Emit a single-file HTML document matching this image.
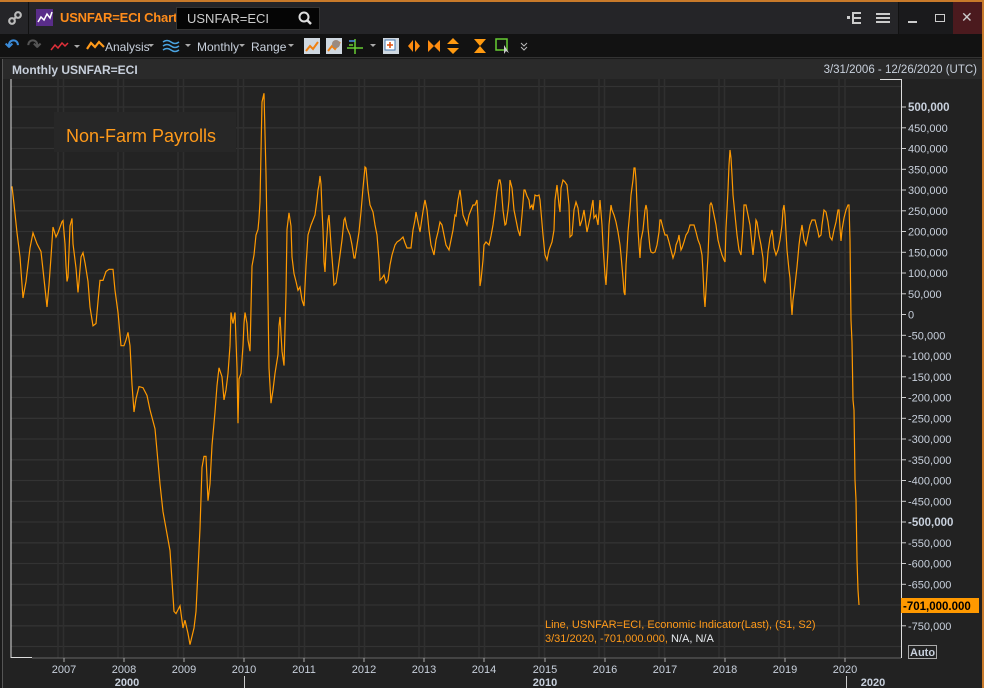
<!DOCTYPE html>
<html><head><meta charset="utf-8"><style>
*{margin:0;padding:0;box-sizing:border-box}
body{width:984px;height:688px;background:#1a1a1a;font-family:"Liberation Sans",sans-serif;overflow:hidden;position:relative}
.abs{position:absolute;white-space:nowrap}
</style></head><body>
<div class="abs" style="left:0;top:0;width:984px;height:2px;background:#c87a2a"></div>
<div class="abs" style="left:982px;top:0;width:2px;height:688px;background:#c87a2a"></div>
<div class="abs" style="left:0;top:2px;width:982px;height:32px;background:#252528"></div>
<div class="abs" style="left:28px;top:2px;width:1px;height:32px;background:#111"></div>
<svg class="abs" style="left:8px;top:11px" width="14" height="14"><g stroke="#bbb" stroke-width="2.2" fill="none"><circle cx="4" cy="10" r="2.8"/><circle cx="10" cy="4" r="2.8"/><line x1="6" y1="8" x2="8" y2="6"/></g></svg>
<svg class="abs" style="left:36px;top:9px" width="17" height="17"><rect width="17" height="17" fill="#5a2d8a"/><polyline points="2,13 5,8 8,11 11,5 14,9 16,3" stroke="#fff" stroke-width="1.5" fill="none"/></svg>
<div class="abs" style="left:60px;top:10px;color:#ff8c1a;font-size:13px;font-weight:bold;letter-spacing:-0.2px">USNFAR=ECI Chart</div>
<div class="abs" style="left:176px;top:7px;width:144px;height:23px;background:#050505;border:1px solid #333"></div>
<div class="abs" style="left:187px;top:11px;color:#ccc;font-size:13px">USNFAR=ECI</div>
<svg class="abs" style="left:298px;top:11px" width="14" height="14"><circle cx="6" cy="6" r="4.5" stroke="#ddd" stroke-width="2" fill="none"/><line x1="9" y1="9" x2="13" y2="13" stroke="#ddd" stroke-width="2.5"/></svg>
<svg class="abs" style="left:847px;top:11px" width="16" height="14"><g fill="#ccc"><rect x="0" y="5" width="3" height="3"/><rect x="5" y="1" width="2" height="12"/><rect x="5" y="1" width="9" height="2"/><rect x="5" y="6" width="9" height="2"/><rect x="5" y="11" width="9" height="2"/></g></svg>
<svg class="abs" style="left:876px;top:13px" width="14" height="11"><g fill="#ccc"><rect y="0" width="14" height="2"/><rect y="4" width="14" height="2"/><rect y="8" width="14" height="2"/></g></svg>
<div class="abs" style="left:898px;top:2px;width:1px;height:32px;background:#111"></div>
<div class="abs" style="left:899px;top:2px;width:83px;height:32px;background:#1a1a1c"></div>
<div class="abs" style="left:908px;top:21px;width:9px;height:2px;background:#ccc"></div>
<div class="abs" style="left:935px;top:14px;width:10px;height:8px;border:1.5px solid #ccc"></div>
<div class="abs" style="left:953px;top:2px;width:29px;height:32px;background:#4b1a1e"></div>
<div class="abs" style="left:961px;top:9px;color:#ccc;font-size:14px">✕</div>
<div class="abs" style="left:0;top:34px;width:982px;height:24px;background:#121212;border-bottom:1px solid #333"></div>
<div class="abs" style="left:5px;top:36px;color:#3b8bd8;font-size:17px;font-weight:bold">↶</div>
<div class="abs" style="left:27px;top:36px;color:#555;font-size:17px;font-weight:bold">↷</div>
<svg class="abs" style="left:50px;top:40px" width="60" height="12"><polyline points="1,10 5,5 8,8 12,3 15,6 18,3" stroke="#e0303a" stroke-width="1.5" fill="none"/><path d="M24 5 l3 3 l3 -3z" fill="#aaa"/></svg>
<svg class="abs" style="left:86px;top:39px" width="20" height="12"><polyline points="1,10 5,4 9,8 13,3 18,8" stroke="#ff9a1a" stroke-width="2.2" fill="none"/></svg>
<div class="abs" style="left:105px;top:40px;color:#c8d0dc;font-size:12px">Analysis</div>
<svg class="abs" style="left:148px;top:44px" width="8" height="5"><path d="M0 0 l3 3 l3 -3z" fill="#aaa"/></svg>
<svg class="abs" style="left:162px;top:38px" width="18" height="16"><g stroke="#4aa3e0" stroke-width="1.5" fill="none"><path d="M1 4 q4 -3 8 0 t8 0"/><path d="M1 8 q4 -3 8 0 t8 0"/><path d="M1 12 q4 -3 8 0 t8 0"/></g></svg>
<svg class="abs" style="left:185px;top:44px" width="8" height="5"><path d="M0 0 l3 3 l3 -3z" fill="#aaa"/></svg>
<div class="abs" style="left:197px;top:40px;color:#c8d0dc;font-size:12px">Monthly</div>
<svg class="abs" style="left:239px;top:44px" width="8" height="5"><path d="M0 0 l3 3 l3 -3z" fill="#aaa"/></svg>
<div class="abs" style="left:251px;top:40px;color:#c8d0dc;font-size:12px">Range</div>
<svg class="abs" style="left:288px;top:44px" width="8" height="5"><path d="M0 0 l3 3 l3 -3z" fill="#aaa"/></svg>
<svg class="abs" style="left:303px;top:37px" width="240" height="18">
<rect x="1" y="1" width="16" height="16" fill="#cfd8e0"/><polyline points="3,14 7,9 10,12 15,5" stroke="#f08010" stroke-width="2" fill="none"/>
<rect x="23" y="1" width="16" height="16" fill="#cfd8e0"/><polyline points="25,14 29,9 32,12 37,5" stroke="#f08010" stroke-width="2" fill="none"/><circle cx="33" cy="7" r="4" fill="#9a8a80"/>
<path d="M46 8 h4 M44 11 h16 M52 2 v15" stroke="#6c3" stroke-width="1.5"/><path d="M46 4 h6" stroke="#4a90e0" stroke-width="1.5"/>
<path d="M67 7 l3 3 l3 -3z" fill="#aaa"/>
<rect x="80" y="1" width="16" height="16" fill="#cfd8e0"/><rect x="82" y="3" width="10" height="10" fill="#fff" stroke="#4a7ab0"/><path d="M87 5 v6 M84 8 h6" stroke="#e05010" stroke-width="1.5"/>
<path d="M105 9 l5 -6 v12z M117 9 l-5 -6 v12z" fill="#ff8c10"/>
<path d="M125 3 l6 6 l-6 6z M137 3 l-6 6 l6 6z" fill="#ff8c10"/>
<path d="M150 1 l6 6 h-12z M150 17 l6 -6 h-12z" fill="#ff9a10"/>
<path d="M171 2 h12 l-6 7z M171 16 h12 l-6 -7z" fill="#ff9a10"/>
<rect x="193" y="2" width="11" height="11" fill="none" stroke="#6c3" stroke-width="1.5"/><path d="M201 8 l0 9 l2 -3 l3 2z" fill="#ccc"/>
<path d="M218 6 l3 3 l3 -3 M218 10 l3 3 l3 -3" stroke="#bbb" fill="none"/>
</svg>
<div class="abs" style="left:2px;top:59px;width:980px;height:629px;background:#222;border-left:1px solid #555"></div>
<div class="abs" style="left:3px;top:59px;width:979px;height:20px;background:#2a2a2a"></div>
<div class="abs" style="left:12px;top:63px;color:#c8d0dc;font-size:12px;font-weight:bold">Monthly USNFAR=ECI</div>
<div class="abs" style="right:7px;top:64px;color:#c8d0dc;font-size:11.5px">3/31/2006 - 12/26/2020 (UTC)</div>
<svg class="abs" style="left:0;top:0" width="984" height="688">
<rect x="11" y="79" width="890" height="579" fill="#232323"/>
<g stroke="#333" stroke-width="1.3">
<line x1="11" x2="901" y1="86.5" y2="86.5"/>
<line x1="11" x2="901" y1="107" y2="107"/><line x1="11" x2="901" y1="127.8" y2="127.8"/><line x1="11" x2="901" y1="148.5" y2="148.5"/><line x1="11" x2="901" y1="169.3" y2="169.3"/><line x1="11" x2="901" y1="190" y2="190"/><line x1="11" x2="901" y1="210.8" y2="210.8"/><line x1="11" x2="901" y1="231.5" y2="231.5"/><line x1="11" x2="901" y1="252.3" y2="252.3"/><line x1="11" x2="901" y1="273" y2="273"/><line x1="11" x2="901" y1="293.8" y2="293.8"/><line x1="11" x2="901" y1="314.5" y2="314.5"/><line x1="11" x2="901" y1="335.3" y2="335.3"/><line x1="11" x2="901" y1="356" y2="356"/><line x1="11" x2="901" y1="376.8" y2="376.8"/><line x1="11" x2="901" y1="397.5" y2="397.5"/><line x1="11" x2="901" y1="418.3" y2="418.3"/><line x1="11" x2="901" y1="439" y2="439"/><line x1="11" x2="901" y1="459.8" y2="459.8"/><line x1="11" x2="901" y1="480.5" y2="480.5"/><line x1="11" x2="901" y1="501.3" y2="501.3"/><line x1="11" x2="901" y1="522" y2="522"/><line x1="11" x2="901" y1="542.8" y2="542.8"/><line x1="11" x2="901" y1="563.5" y2="563.5"/><line x1="11" x2="901" y1="584.3" y2="584.3"/><line x1="11" x2="901" y1="605" y2="605"/><line x1="11" x2="901" y1="625.8" y2="625.8"/><line x1="11" x2="901" y1="646.5" y2="646.5"/>
</g>
<g stroke="#2f2f2f" stroke-width="1.5">
<line x1="58" x2="58" y1="79" y2="658"/><line x1="63.5" x2="63.5" y1="79" y2="658"/>
<line x1="118" x2="118" y1="79" y2="658"/><line x1="123.5" x2="123.5" y1="79" y2="658"/>
<line x1="178" x2="178" y1="79" y2="658"/><line x1="183.5" x2="183.5" y1="79" y2="658"/>
<line x1="238" x2="238" y1="79" y2="658"/><line x1="243.5" x2="243.5" y1="79" y2="658"/>
<line x1="299" x2="299" y1="79" y2="658"/><line x1="304.5" x2="304.5" y1="79" y2="658"/>
<line x1="359" x2="359" y1="79" y2="658"/><line x1="364.5" x2="364.5" y1="79" y2="658"/>
<line x1="419" x2="419" y1="79" y2="658"/><line x1="424.5" x2="424.5" y1="79" y2="658"/>
<line x1="479" x2="479" y1="79" y2="658"/><line x1="484.5" x2="484.5" y1="79" y2="658"/>
<line x1="539" x2="539" y1="79" y2="658"/><line x1="544.5" x2="544.5" y1="79" y2="658"/>
<line x1="599" x2="599" y1="79" y2="658"/><line x1="604.5" x2="604.5" y1="79" y2="658"/>
<line x1="659" x2="659" y1="79" y2="658"/><line x1="664.5" x2="664.5" y1="79" y2="658"/>
<line x1="719" x2="719" y1="79" y2="658"/><line x1="724.5" x2="724.5" y1="79" y2="658"/>
<line x1="779" x2="779" y1="79" y2="658"/><line x1="784.5" x2="784.5" y1="79" y2="658"/>
<line x1="839" x2="839" y1="79" y2="658"/><line x1="845" x2="845" y1="79" y2="658"/>
</g>
<line x1="11" x2="11" y1="79" y2="658" stroke="#ddd" stroke-width="1"/>
<line x1="11" x2="32" y1="657.5" y2="657.5" stroke="#ddd"/>
<line x1="32" x2="901" y1="658" y2="658" stroke="#666"/>
<line x1="880" x2="901" y1="79.5" y2="79.5" stroke="#ddd"/>
<line x1="901.5" x2="901.5" y1="79" y2="658" stroke="#ddd"/>
<rect x="54" y="112" width="182" height="40" fill="#272727"/>
<text x="66" y="142" fill="#ff9a1a" font-size="18" font-family="Liberation Sans, sans-serif">Non-Farm Payrolls</text>
<polyline fill="none" stroke="#ff9900" stroke-width="1.2" points="12,186.3 14,204 17,232.8 20,257 23,298 26,281.5 30,248 33,232.8 37,243.8 41,251.6 44,279 47,307 49,284.8 51,257 53,227 56,237 58,232.8 62,221.7 63,220.6 65,243.8 66,266 67,281.5 68,277 70,226 72,218.4 73,243.8 76,268 78,292.5 79,281.5 81,257 83,252.7 85,262.7 88,281.5 90,307 93,325.8 96,323.5 98,301.4 100,280.4 103,280.4 106,271.5 109,269.3 113,269.3 115,290.3 118,312.5 121,345.7 124,345.7 126,340 128,332.4 130,345.7 132,384.4 134,412 136,398.8 139,386.6 143,387.7 147,395.5 150,409.9 155,428.7 160,484 163,511.7 166,528.3 170,550.5 174,611.4 176,613.6 180,605.8 183,628 185,620.2 188,633.5 190,644.6 194,628 196,611.4 200,528.3 202,467.5 204,456.4 206,456.4 208,500.7 210,484 212,445.3 215,412 217,385.5 219,367.8 222,376.7 224,399.9 226,390 228,373.4 230,345.7 231,312.5 233,323.5 235,312.5 237,367.8 238,423.2 239,378.9 241,373.4 243,345.7 244,323.5 245,312.5 247,323.5 248,340 250,351.2 252,266 254,255 256,235 258,229.4 259,218.4 260,201.8 262,102 264,93.3 266,174 267,229.4 268,301.4 269,367.8 271,403.2 273,390 275,373.4 278,354.5 279,325.8 280,316.9 282,351.2 284,365.6 286,292.5 287,229.4 289,212.8 291,226 292,257 294,273.7 296,281.5 298,290.3 300,287 302,300 304,306 306,266 308,235 311,225 313,220 315,215 317,200 318,190 319,185 320,176 321,184 322,210 323,230 324,262 325,272 326,250 328,220 329,215 331,245 333,270 334,285 336,283 338,270 340,255 342,240 344,220 345,218 347,228 350,235 352,245 354,258 355,258 357,245 359,232 361,212 363,188 365,167 366,168 368,190 370,205 373,212 375,225 377,235 379,260 380,280 382,278 384,275 386,283 388,280 390,265 392,255 395,245 397,242 400,240 403,237 405,243 407,248 411,248 413,230 415,220 416,212 418,222 420,232 422,218 424,205 425,200 427,210 429,230 431,245 434,255 436,240 438,232 440,222 442,225 444,235 446,245 449,250 451,240 453,230 455,215 456,216 458,200 460,190 461,198 463,215 465,220 467,225 469,215 471,210 473,205 475,205 477,200 478,218 479,253 480,286 481,280 483,260 484,245 486,242 489,245 491,236 493,225 495,210 497,192 499,180 500,180 501,185 503,210 505,225 506,224 508,210 509,200 510,180 512,188 514,210 516,220 518,230 520,236 522,215 524,190 525,190 527,196 529,200 530,208 532,205 533,210 535,195 537,196 539,195 540,200 543,235 545,255 547,260 549,250 552,242 554,230 555,200 557,185 559,205 560,212 561,188 563,180 565,182 567,185 569,205 570,237 572,235 574,210 576,202 578,208 580,226 582,220 584,210 587,232 590,218 592,205 593,200 594,218 596,215 598,225 600,200 602,225 603,245 605,275 606,285 608,250 609,225 611,205 612,210 614,215 616,222 618,232 620,245 621,255 623,278 624,292 625,295 626,265 627,250 628,232 630,210 631,195 633,180 634,168 635,168 636,180 637,205 638,230 639,245 640,258 641,240 643,230 645,210 646,205 647,210 648,228 650,248 651,252 653,253 655,252 657,245 659,232 660,220 661,220 663,228 665,235 667,235 669,242 671,250 673,258 675,252 676,245 678,240 679,235 680,243 681,250 682,248 684,242 686,235 688,232 690,225 694,225 696,232 698,240 700,245 702,255 703,272 704,295 705,307 706,290 708,256 710,205 711,203 712,205 714,215 716,225 718,240 720,248 722,255 724,260 725,262 726,228 727,210 728,190 729,165 730,150 731,158 732,175 733,195 735,215 737,235 739,250 741,255 743,227 744,205 746,205 748,215 750,225 752,245 753,255 754,245 755,235 756,220 757,222 759,235 761,245 763,258 764,280 765,282 767,265 768,252 770,238 772,230 773,238 774,248 776,255 778,250 780,240 782,225 783,210 784,205 785,215 787,250 789,270 790,278 791,300 792,315 793,300 795,285 797,267 799,245 800,237 802,225 804,240 806,245 808,235 810,225 812,220 815,220 818,232 819,237 821,235 822,225 824,210 826,212 828,222 830,237 832,240 834,230 836,222 838,210 839,210 840,228 841,241 842,230 844,218 846,210 848,205 849,205 850,240 851,320 852,342 853,400 854,410 855,480 856,500 857,560 858,590 859,605"/>
<g font-family="Liberation Sans, sans-serif" font-size="11" fill="#c8d0dc">
<g stroke="#ccc"><line x1="902" x2="906" y1="107" y2="107"/><line x1="902" x2="906" y1="127.8" y2="127.8"/><line x1="902" x2="906" y1="148.5" y2="148.5"/><line x1="902" x2="906" y1="169.3" y2="169.3"/><line x1="902" x2="906" y1="190" y2="190"/><line x1="902" x2="906" y1="210.8" y2="210.8"/><line x1="902" x2="906" y1="231.5" y2="231.5"/><line x1="902" x2="906" y1="252.3" y2="252.3"/><line x1="902" x2="906" y1="273" y2="273"/><line x1="902" x2="906" y1="293.8" y2="293.8"/><line x1="902" x2="906" y1="314.5" y2="314.5"/><line x1="902" x2="906" y1="335.3" y2="335.3"/><line x1="902" x2="906" y1="356" y2="356"/><line x1="902" x2="906" y1="376.8" y2="376.8"/><line x1="902" x2="906" y1="397.5" y2="397.5"/><line x1="902" x2="906" y1="418.3" y2="418.3"/><line x1="902" x2="906" y1="439" y2="439"/><line x1="902" x2="906" y1="459.8" y2="459.8"/><line x1="902" x2="906" y1="480.5" y2="480.5"/><line x1="902" x2="906" y1="501.3" y2="501.3"/><line x1="902" x2="906" y1="522" y2="522"/><line x1="902" x2="906" y1="542.8" y2="542.8"/><line x1="902" x2="906" y1="563.5" y2="563.5"/><line x1="902" x2="906" y1="584.3" y2="584.3"/><line x1="902" x2="906" y1="625.8" y2="625.8"/></g>
<text x="908" y="111" font-weight="bold" font-size="11.5">500,000</text>
<text x="908" y="132">450,000</text><text x="908" y="152.5">400,000</text><text x="908" y="173.3">350,000</text><text x="908" y="194">300,000</text><text x="908" y="214.8">250,000</text><text x="908" y="235.5">200,000</text><text x="908" y="256.3">150,000</text><text x="908" y="277">100,000</text><text x="908" y="297.8">50,000</text><text x="908" y="318.5">0</text><text x="908" y="339.3">-50,000</text><text x="908" y="360">-100,000</text><text x="908" y="380.8">-150,000</text><text x="908" y="401.5">-200,000</text><text x="908" y="422.3">-250,000</text><text x="908" y="443">-300,000</text><text x="908" y="463.8">-350,000</text><text x="908" y="484.5">-400,000</text><text x="908" y="505.3">-450,000</text>
<text x="908" y="526" font-weight="bold" font-size="11.5">-500,000</text>
<text x="908" y="546.8">-550,000</text><text x="908" y="567.5">-600,000</text><text x="908" y="588.3">-650,000</text><text x="908" y="629.8">-750,000</text>
<rect x="901" y="598" width="78" height="15" fill="#ff9900"/>
<text x="903" y="610" font-weight="bold" fill="#000" font-size="11.5">-701,000.000</text>
<rect x="908.5" y="645.5" width="28" height="13" fill="none" stroke="#aaa"/>
<text x="910" y="656" font-weight="bold">Auto</text>
<g stroke="#aaa"><line x1="64" x2="64" y1="658" y2="662"/><line x1="124" x2="124" y1="658" y2="662"/><line x1="184" x2="184" y1="658" y2="662"/><line x1="244" x2="244" y1="658" y2="662"/><line x1="304" x2="304" y1="658" y2="662"/><line x1="364" x2="364" y1="658" y2="662"/><line x1="424" x2="424" y1="658" y2="662"/><line x1="484" x2="484" y1="658" y2="662"/><line x1="545" x2="545" y1="658" y2="662"/><line x1="605" x2="605" y1="658" y2="662"/><line x1="665" x2="665" y1="658" y2="662"/><line x1="725" x2="725" y1="658" y2="662"/><line x1="785" x2="785" y1="658" y2="662"/><line x1="845" x2="845" y1="658" y2="662"/></g>
<g text-anchor="middle"><text x="64" y="673">2007</text><text x="124" y="673">2008</text><text x="184" y="673">2009</text><text x="244" y="673">2010</text><text x="304" y="673">2011</text><text x="364" y="673">2012</text><text x="424" y="673">2013</text><text x="484" y="673">2014</text><text x="545" y="673">2015</text><text x="605" y="673">2016</text><text x="665" y="673">2017</text><text x="725" y="673">2018</text><text x="785" y="673">2019</text><text x="845" y="673">2020</text>
<text x="127" y="686" font-weight="bold">2000</text><text x="545" y="686" font-weight="bold">2010</text><text x="873" y="686" font-weight="bold">2020</text></g>
<line x1="244.5" x2="244.5" y1="676" y2="688" stroke="#ccc"/>
<line x1="846.5" x2="846.5" y1="676" y2="688" stroke="#ccc"/>
<text x="545" y="628" fill="#ff9a1a">Line, USNFAR=ECI, Economic Indicator(Last), (S1, S2)</text>
<text x="545" y="642" fill="#ff9a1a">3/31/2020, -701,000.000, <tspan fill="#e8ecf0">N/A, N/A</tspan></text>
</g>
</svg>
</body></html>
